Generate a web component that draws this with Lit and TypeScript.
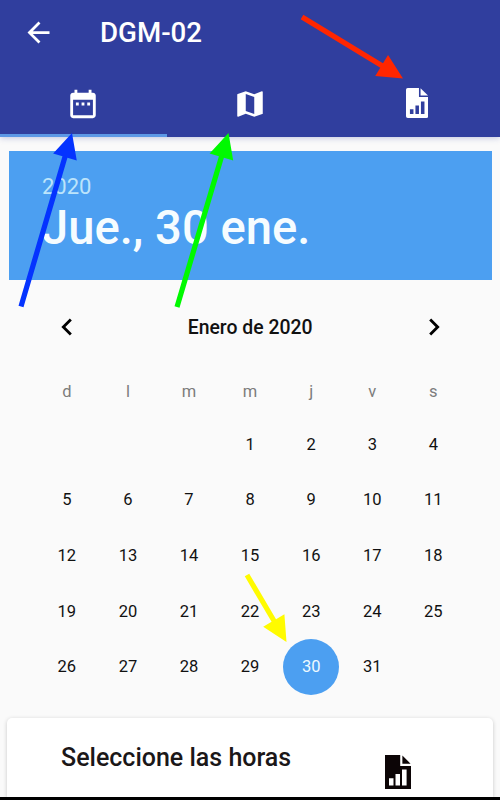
import { LitElement, html, css, svg } from "lit";
import { customElement, property } from "lit/decorators.js";
import { classMap } from "lit/directives/class-map.js";

@customElement("report-icon")
class ReportIcon extends LitElement {
  static styles = css`
    :host { display: block; }
    svg { display: block; width: 100%; height: 100%; }
  `;
  @property({ type: Boolean }) square = false;
  render() {
    return this.square
      ? html`<svg viewBox="0 0 26 34" preserveAspectRatio="none" fill="currentColor" fill-rule="evenodd">
          <path d="M0 0H15.2V11H26V34H0zM4 23.3V30.6H8.5V23.3zM10.5 19V30.6H15V19zM17 14.6V30.6H21.6V14.6z" />
          <path d="M17.4 0.4L25.6 8.8H17.4z" />
        </svg>`
      : html`<svg viewBox="0 0 23 30" preserveAspectRatio="none" fill="currentColor" fill-rule="evenodd">
          <path d="M1.8 0H13.2V8.9H22.6V28.2Q22.6 30 20.8 30H1.8Q0 30 0 28.2V1.8Q0 0 1.8 0zM4 21.2V26H7.6V21.2zM9.6 17.4V26H13.2V17.4zM15.2 13.6V26H18.8V13.6z" />
          <path d="M14.8 0.2L22.4 7.4H14.8z" />
        </svg>`;
  }
}

@customElement("calendar-view")
class CalendarView extends LitElement {
  static styles = css`
    :host { display: block; padding: 0 8.4px 0 8.6px; }
    .banner { height: 129px; box-sizing: border-box; background: #4c9ff1; padding: 22px 0 0 33.4px; color: #fff; white-space: nowrap; }
    .year { font-size: 22px; line-height: 28px; color: #bce4fb; font-weight: 400; }
    .date { font-size: 47.2px; line-height: 54px; font-weight: 500; color: #f6fcff; }
    .month { height: 94px; display: flex; align-items: center; justify-content: space-between; padding: 0 41px; }
    .name { font-size: 19.4px; font-weight: 500; color: #111; padding-top: 1px; }
    .chev { display: block; width: 34px; height: 34px; fill: #000; }
    .grid { display: grid; grid-template-columns: repeat(7, 61.1px); grid-template-rows: 42.6px; grid-auto-rows: 55.6px; justify-content: center; }
    .dow, .day { display: flex; align-items: center; justify-content: center; font-size: 16.5px; }
    .dow { color: #7c7c7c; height: 34px; }
    .day { color: #111; }
    .gap { grid-column: span 3; }
    .sel span { width: 56px; height: 56px; flex: none; border-radius: 50%; background: #4c9ff1; color: #eef9ff; display: flex; align-items: center; justify-content: center; }
  `;
  @property({ type: Number }) selected = 30;
  render() {
    const days = Array.from({ length: 31 }, (_, i) => i + 1);
    return html`
      <div class="banner"><div class="year">2020</div><div class="date">Jue., 30 ene.</div></div>
      <div class="month">
        <svg class="chev" viewBox="0 0 24 24"><path d="M15.41 7.41 14 6l-6 6 6 6 1.41-1.41L10.83 12z" /></svg>
        <span class="name">Enero de 2020</span>
        <svg class="chev" viewBox="0 0 24 24"><path d="M10 6 8.59 7.41 13.17 12l-4.58 4.59L10 18l6-6z" /></svg>
      </div>
      <div class="grid">
        ${["d", "l", "m", "m", "j", "v", "s"].map((d) => html`<div class="dow">${d}</div>`)}
        <div class="gap"></div>
        ${days.map((d) => html`<div class=${classMap({ day: true, sel: d === this.selected })}><span>${d}</span></div>`)}
      </div>`;
  }
}

interface Arrow { color: string; tail: [number, number]; tip: [number, number]; head: number; }

@customElement("app-root")
class AppRoot extends LitElement {
  static styles = css`
    :host { display: flex; flex-direction: column; position: relative; width: 500px; height: 800px; overflow: hidden; background: #fafafa; font-family: Roboto, "Liberation Sans", sans-serif; }
    header { flex: none; height: 137px; background: #303e9e; color: #fff; display: flex; flex-direction: column; box-shadow: 0 1px 6px rgba(48, 62, 158, .28); }
    .bar { height: 64px; display: flex; align-items: center; padding-left: 22px; gap: 45px; }
    .back { width: 33px; height: 33px; fill: #fff; }
    h1 { margin: 0; padding-top: 1px; font-size: 27.7px; font-weight: 500; }
    .tabs { flex: 1; display: grid; grid-template-columns: repeat(3, 1fr); }
    .tab { display: flex; align-items: center; justify-content: center; box-sizing: border-box; border-bottom: 3px solid transparent; padding-top: 9px; }
    .tab.active { border-color: #5c98e6; }
    .tab svg { width: 34px; height: 34px; fill: #fff; }
    .tab report-icon { width: 22.6px; height: 30px; margin: 0 0 2px 1px; }
    calendar-view { flex: none; margin-top: 14px; }
    .card { flex: 1; margin: 23.4px 7px 0; background: #fff; border-radius: 5px 5px 0 0; box-shadow: 0 1px 4px rgba(0, 0, 0, .2); display: flex; justify-content: space-between; align-items: flex-start; padding: 0 82px 0 54px; }
    h2 { margin: 25px 0 0; font-size: 25px; line-height: 30px; font-weight: 500; color: #1b1718; white-space: nowrap; }
    .card report-icon { width: 26px; height: 34px; margin-top: 37.4px; color: #0c0506; }
    .nav { flex: none; height: 3px; background: #000; z-index: 1; }
    .notes { position: absolute; inset: 0; width: 500px; height: 800px; z-index: 2; }
  `;
  private arrows: Arrow[] = [
    { color: "#0433ff", tail: [21, 306.5], tip: [72, 133], head: 25 },
    { color: "#00f900", tail: [177, 307], tip: [228.5, 133], head: 25 },
    { color: "#ff2600", tail: [302, 17], tip: [403, 78.5], head: 25 },
    { color: "#fffb00", tail: [247, 575], tip: [286.5, 642], head: 25 },
  ];
  private drawArrow({ color, tail, tip, head }: Arrow) {
    const dx = tip[0] - tail[0];
    const dy = tip[1] - tail[1];
    const len = Math.hypot(dx, dy);
    const angle = (Math.atan2(dy, dx) * 180) / Math.PI;
    const neck = len - head;
    return svg`<path fill=${color} transform="translate(${tail[0]} ${tail[1]}) rotate(${angle})"
      d="M0 -2.6H${neck}V-12.3L${len} 0L${neck} 12.3V2.6H0z" />`;
  }
  render() {
    return html`
      <header>
        <div class="bar">
          <svg class="back" viewBox="0 0 24 24"><path d="M20 11H7.83l5.59-5.59L12 4l-8 8 8 8 1.41-1.41L7.83 13H20v-2z" /></svg>
          <h1>DGM-02</h1>
        </div>
        <div class="tabs">
          <div class="tab active"><svg viewBox="0 0 24 24"><path d="M9 11H7v2h2v-2zm4 0h-2v2h2v-2zm4 0h-2v2h2v-2zm2-7h-1V2h-2v2H8V2H6v2H5c-1.11 0-1.99.9-1.99 2L3 20c0 1.1.89 2 2 2h14c1.1 0 2-.9 2-2V6c0-1.1-.9-2-2-2zm0 16H5V9h14v11z" /></svg></div>
          <div class="tab"><svg viewBox="0 0 24 24"><path d="M20.5 3l-.16.03L15 5.1 9 3 3.36 4.9c-.21.07-.36.25-.36.48V20.5c0 .28.22.5.5.5l.16-.03L9 18.9l6 2.1 5.64-1.9c.21-.07.36-.25.36-.48V3.5c0-.28-.22-.5-.5-.5zM15 19l-6-2.11V5l6 2.11V19z" /></svg></div>
          <div class="tab"><report-icon></report-icon></div>
        </div>
      </header>
      <calendar-view></calendar-view>
      <section class="card"><h2>Seleccione las horas</h2><report-icon square></report-icon></section>
      <div class="nav"></div>
      <svg class="notes" viewBox="0 0 500 800">${this.arrows.map((a) => this.drawArrow(a))}</svg>`;
  }
}
